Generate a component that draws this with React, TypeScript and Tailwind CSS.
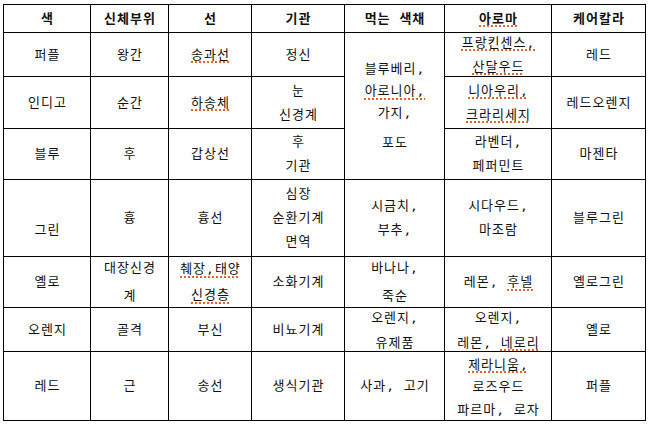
import React from "react";

const U = ({ children }: { children: React.ReactNode }) => (
  <span className="underline decoration-dotted decoration-[#e0662a] decoration-[1.5px] underline-offset-[3px]">
    {children}
  </span>
);

function Cell({
  lines,
  bold,
  leading = "leading-[24px]",
  extra = "",
}: {
  lines: React.ReactNode[];
  bold?: boolean;
  leading?: string;
  extra?: string;
}) {
  return (
    <div
      className={`border-r border-b border-black flex flex-col items-center justify-center text-center whitespace-nowrap ${leading} ${
        bold ? "font-bold" : ""
      } ${extra}`}
    >
      {lines.map((l, i) => (
        <div key={i} className="pl-[1px]">
          {l}
        </div>
      ))}
    </div>
  );
}

export default function App() {
  return (
    <div className="w-[651px] h-[424px] bg-white pt-[4px] pl-[3px] font-['DejaVu_Sans_Mono','Noto_Sans_CJK_KR',sans-serif] text-[13px] tracking-[1px] text-[#111]">
      <div className="grid w-fit border-l border-t border-black grid-cols-[87px_78px_83px_93px_100px_107px_94px] grid-rows-[28px_44px_52px_51px_77px_51px_44px_69px]">
        {/* header */}
        <Cell bold lines={["색"]} />
        <Cell bold lines={["신체부위"]} />
        <Cell bold lines={["선"]} />
        <Cell bold lines={["기관"]} />
        <Cell bold lines={["먹는 색채"]} />
        <Cell bold lines={[<U>아로마</U>]} />
        <Cell bold lines={["케어칼라"]} />

        {/* row 2 */}
        <Cell lines={["퍼플"]} />
        <Cell lines={["왕간"]} />
        <Cell lines={[<U>송과선</U>]} />
        <Cell lines={["정신"]} />
        <div className="col-start-5 row-start-2 row-span-3 border-r border-b border-black flex flex-col items-center justify-center text-center leading-[22px] whitespace-nowrap">
          <div className="pl-[1px]">블루베리,</div>
          <div className="pl-[1px]">
            <U>아로니아,</U>
          </div>
          <div className="pl-[1px]">가지,</div>
          <div className="pl-[1px] mt-[8px]">포도</div>
        </div>
        <Cell lines={[<U>프랑킨센스,</U>, <U>산달우드</U>]} />
        <Cell lines={["레드"]} />

        {/* row 3 */}
        <Cell lines={["인디고"]} />
        <Cell lines={["순간"]} />
        <Cell lines={[<U>하송체</U>]} />
        <Cell lines={["눈", "신경계"]} />
        <Cell lines={[<U>니아우리,</U>, <U>크라리세지</U>]} />
        <Cell lines={["레드오렌지"]} />

        {/* row 4 */}
        <Cell lines={["블루"]} />
        <Cell lines={["후"]} />
        <Cell lines={["갑상선"]} />
        <Cell lines={["후", "기관"]} />
        <Cell lines={["라벤더,", "페퍼민트"]} />
        <Cell lines={["마젠타"]} />

        {/* row 5 */}
        <Cell lines={["그린"]} extra="pt-[24px]" />
        <Cell lines={["흉"]} />
        <Cell lines={["흉선"]} />
        <Cell lines={["심장", "순환기계", "면역"]} />
        <Cell lines={["시금치,", "부추,"]} />
        <Cell lines={["시다우드,", "마조람"]} />
        <Cell lines={["블루그린"]} />

        {/* row 6 */}
        <Cell lines={["옐로"]} />
        <Cell lines={["대장신경", "계"]} leading="leading-[28px]" />
        <Cell lines={[<U>췌장,태양</U>, <U>신경층</U>]} leading="leading-[26px]" />
        <Cell lines={["소화기계"]} />
        <Cell lines={["바나나,", "죽순"]} leading="leading-[28px]" />
        <Cell
          lines={[
            <span>
              레몬, <U>후넬</U>
            </span>,
          ]}
        />
        <Cell lines={["옐로그린"]} />

        {/* row 7 */}
        <Cell lines={["오렌지"]} />
        <Cell lines={["골격"]} />
        <Cell lines={["부신"]} />
        <Cell lines={["비뇨기계"]} />
        <Cell lines={["오렌지,", "유제품"]} leading="leading-[25px]" />
        <Cell
          lines={[
            "오렌지,",
            <span>
              레몬, <U>네로리</U>
            </span>,
          ]}
          leading="leading-[25px]"
        />
        <Cell lines={["옐로"]} />

        {/* row 8 */}
        <Cell lines={["레드"]} />
        <Cell lines={["근"]} />
        <Cell lines={["송선"]} />
        <Cell lines={["생식기관"]} />
        <Cell lines={["사과, 고기"]} />
        <Cell
          lines={[<U>제라니움,</U>, "로즈우드", "파르마, 로자"]}
          leading="leading-[22.5px]"
          extra="pt-[3px]"
        />
        <Cell lines={["퍼플"]} />
      </div>
    </div>
  );
}
